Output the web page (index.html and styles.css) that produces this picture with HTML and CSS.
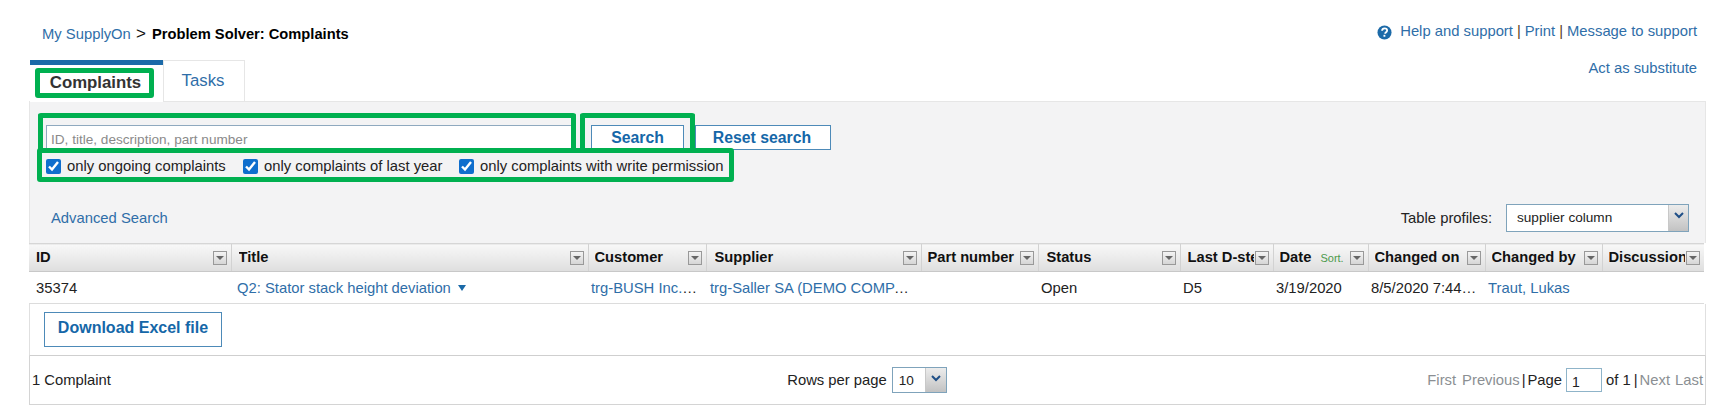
FILE: index.html
```html
<!DOCTYPE html>
<html lang="en">
<head>
<meta charset="utf-8">
<title>Problem Solver: Complaints</title>
<link rel="stylesheet" href="styles.css">
</head>
<body>
<div class="page">
  <header class="top">
    <nav class="crumbs"><a href="#">My SupplyOn</a> <span class="sep">&gt;</span> <b>Problem Solver: Complaints</b></nav>
    <div class="help">
      <svg class="help-icon" viewBox="0 0 16 16" width="15" height="15"><circle cx="8" cy="8" r="7.5" fill="#1c6aa8"/><path d="M5.4 6.2C5.5 4.6 6.6 3.7 8.1 3.7c1.6 0 2.7.9 2.7 2.2 0 1.1-.7 1.6-1.4 2.1-.5.4-.7.6-.7 1.2" fill="none" stroke="#fff" stroke-width="1.9"/><rect x="6.9" y="10.5" width="2" height="2" fill="#fff"/></svg>
      <a href="#">Help and support</a> <span class="bar">|</span> <a href="#">Print</a> <span class="bar">|</span> <a href="#">Message to support</a>
    </div>
  </header>
  <div class="tabrow">
    <div class="tab tab-active">Complaints</div>
    <a class="tab tab-plain" href="#">Tasks</a>
    <a class="substitute" href="#">Act as substitute</a>
  </div>
  <section class="panel">
    <form class="search">
      <input class="search-input" type="text" placeholder="ID, title, description, part number">
      <button class="btn btn-search" type="button">Search</button>
      <button class="btn btn-reset" type="button">Reset search</button>
    </form>
    <div class="checks">
      <label class="check check-a"><input type="checkbox" checked>only ongoing complaints</label>
      <label class="check check-b"><input type="checkbox" checked>only complaints of last year</label>
      <label class="check"><input type="checkbox" checked>only complaints with write permission</label>
    </div>
    <div class="tools">
      <a href="#">Advanced Search</a>
      <div class="profiles">
        <span>Table profiles:</span>
        <div class="select select-profile"><span class="select-value">supplier column</span><span class="select-arrow"><svg viewBox="0 0 10 7" width="10" height="7"><path d="M1 1l4 4 4-4" fill="none" stroke="#1f4f87" stroke-width="2"/></svg></span></div>
      </div>
    </div>
  </section>
  <table class="grid">
    <colgroup>
      <col class="c-id"><col class="c-title"><col class="c-customer"><col class="c-supplier"><col class="c-part"><col class="c-status"><col class="c-last"><col class="c-date"><col class="c-on"><col class="c-by"><col class="c-disc">
    </colgroup>
    <thead>
      <tr>
        <th class="first"><div class="th"><span class="th-label">ID</span><i class="filter"></i></div></th>
        <th class="th-nudge1"><div class="th"><span class="th-label">Title</span><i class="filter"></i></div></th>
        <th><div class="th"><span class="th-label">Customer</span><i class="filter"></i></div></th>
        <th class="th-nudge2"><div class="th"><span class="th-label">Supplier</span><i class="filter"></i></div></th>
        <th><div class="th"><span class="th-label">Part number</span><i class="filter"></i></div></th>
        <th class="th-nudge2"><div class="th"><span class="th-label">Status</span><i class="filter"></i></div></th>
        <th class="th-nudge1"><div class="th"><span class="th-label">Last D-step</span><i class="filter"></i></div></th>
        <th><div class="th"><span class="th-label">Date <small class="sort">Sort.</small></span><i class="filter"></i></div></th>
        <th><div class="th"><span class="th-label">Changed on</span><i class="filter"></i></div></th>
        <th><div class="th"><span class="th-label">Changed by</span><i class="filter"></i></div></th>
        <th><div class="th"><span class="th-label">Discussion</span><i class="filter"></i></div></th>
      </tr>
    </thead>
    <tbody>
      <tr>
        <td class="cell-id">35374</td>
        <td class="cell-title"><a href="#">Q2: Stator stack height deviation</a><span class="caret"></span></td>
        <td><a href="#">trg-BUSH Inc. (DEMO COMPANY)</a></td>
        <td class="cell-supplier"><a href="#">trg-Saller SA (DEMO COMPANY)</a></td>
        <td></td>
        <td>Open</td>
        <td>D5</td>
        <td>3/19/2020</td>
        <td>8/5/2020 7:44:12 AM</td>
        <td><a href="#">Traut, Lukas</a></td>
        <td></td>
      </tr>
    </tbody>
  </table>
  <div class="actions"><button class="btn btn-excel" type="button">Download Excel file</button></div>
  <footer class="pager">
    <div class="count">1 Complaint</div>
    <div class="rows">
      <span>Rows per page</span>
      <div class="select select-rows"><span class="select-value">10</span><span class="select-arrow"><svg viewBox="0 0 10 7" width="10" height="7"><path d="M1 1l4 4 4-4" fill="none" stroke="#1f4f87" stroke-width="2"/></svg></span></div>
    </div>
    <div class="pages">
      <span class="off off-first">First</span><span class="off">Previous</span><span class="div">|</span><span>Page</span><input class="page-input" type="text" value="1"><span class="of">of 1</span><span class="div">|</span><span class="off off-next">Next</span><span class="off">Last</span>
    </div>
  </footer>
  <div class="mark mark-tab"></div>
  <div class="mark mark-input"></div>
  <div class="mark mark-search"></div>
  <div class="mark mark-checks"></div>
</div>
</body>
</html>
```
FILE: styles.css
```css
* { box-sizing: border-box; }
html, body { margin: 0; background: #fff; }
body {
  font-family: "Liberation Sans", Arial, sans-serif;
  font-size: 14.8px;
  color: #222;
  overflow: hidden;
}
a { color: #2f6ea8; text-decoration: none; }
.page { position: relative; width: 1714px; height: 417px; padding-left: 29px; }
.top { display: flex; justify-content: space-between; height: 60px; padding: 23px 17px 0 13px; }
.crumbs { line-height: 18px; padding-top: 2px; }
.crumbs b { color: #000; font-size: 14.7px; margin-left: 1px; }
.sep { font-size: 17px; color: #111; margin: 0 1px; }
.help { display: flex; gap: 4px; align-items: center; height: 16px; }
.help-icon { margin-right: 4px; margin-top: 2px; }
.bar { color: #5a3a20; }
.tabrow { display: flex; height: 42px; position: relative; padding-right: 17px; }
.tab { display: block; text-align: center; font-size: 16.8px; }
.tab-active { width: 133px; margin-left: 1px; height: 42px; border-top: 5px solid #1b6aa8; background: #fff; color: #333; font-weight: bold; padding: 8px 2px 0 0; line-height: 20px; position: relative; }
.tab-plain { width: 82px; border: 1px solid #e6e6e6; border-bottom: 0; padding: 10px 2px 0 0; line-height: 20px; }
.substitute { margin-left: auto; line-height: 18px; margin-top: -1px; }
.panel {
  width: 1677px; height: 142px;
  margin-top: -1px;
  background: #f3f3f4;
  border: 1px solid #e6e6e6;
  border-bottom: 0;
  padding: 23px 0 0 16px;
}
.search { display: flex; height: 25px; }
.search-input {
  width: 530px; height: 25px; margin: 0;
  border: 1px solid #8fa9bf;
  padding: 3px 4px 0;
  font: 13.6px "Liberation Sans", Arial, sans-serif;
  background: #fff;
}
.search-input::placeholder { color: #8a8a8a; opacity: 1; }
.btn {
  display: block; margin: 0; padding: 0;
  font-family: "Liberation Sans", Arial, sans-serif;
  font-weight: bold; font-size: 15.8px; color: #1567a8;
  background: #fff; border: 1px solid #4d8ab8;
}
.btn-search { width: 93px; height: 25px; margin-left: 15px; }
.btn-reset { width: 136px; height: 25px; margin-left: 11px; padding-right: 2px; }
.checks { display: flex; height: 26px; margin-top: 3px; align-items: center; }
.check { display: flex; align-items: center; white-space: nowrap; }
.check input { width: 15px; height: 15px; margin: 0 6px 0 0; accent-color: #0f6ecd; }
.check-a { width: 197px; }
.check-b { width: 216px; }
.tools { display: flex; justify-content: space-between; align-items: center; height: 28px; margin-top: 25px; padding: 0 16px 0 5px; }
.profiles { display: flex; align-items: center; gap: 14px; }
.select { display: flex; background: #fff; border: 1px solid #7fa3bb; }
.select-value { flex: 1; font-size: 13.6px; }
.select-arrow {
  display: flex; justify-content: center;
  background: linear-gradient(#ececec, #c2c2c2);
  border-left: 1px solid #c8c8c8;
}
.select-profile { width: 183px; height: 28px; line-height: 26px; }
.select-profile .select-value { padding-left: 10px; }
.select-profile .select-arrow { width: 20px; padding-top: 7px; }
.select-rows { width: 55px; height: 26px; line-height: 25px; }
.select-rows .select-value { padding-left: 6px; }
.select-rows .select-arrow { width: 21px; padding-top: 7px; }
.grid { table-layout: fixed; width: 1675px; border-collapse: collapse; }
.c-id { width: 202px; } .c-title { width: 357px; } .c-customer { width: 118px; }
.c-supplier { width: 215px; } .c-part { width: 117px; } .c-status { width: 142px; }
.c-last { width: 93px; } .c-date { width: 95px; } .c-on { width: 117px; }
.c-by { width: 117px; } .c-disc { width: 102px; }
.grid th {
  height: 28px; padding: 0 0 2px 6px;
  background: linear-gradient(#f8f8f8, #dedede);
  border-top: 1px solid #d6d6d6;
  border-bottom: 1px solid #c8c8c8;
  border-left: 1px solid #d2d2d2;
  text-align: left; color: #111;
  font-size: 14.7px;
}
.grid th.first { border-left: 0; padding-left: 7px; }
.grid th.th-nudge1 { padding-left: 7px; }
.grid th.th-nudge2 { padding-left: 8px; }
.th { display: flex; align-items: center; justify-content: space-between; padding-right: 4px; }
.th-label { overflow: hidden; white-space: nowrap; flex: 1; min-width: 0; }
.sort { color: #4c9a4c; font-weight: normal; font-size: 11px; margin-left: 5px; }
.filter {
  flex: none; width: 14px; height: 14px; margin-left: 1px; margin-top: 2px;
  background: linear-gradient(#f4f4f4, #d6d6d6);
  border: 1px solid #999;
  position: relative;
}
.filter::after {
  content: ""; position: absolute; left: 2px; top: 4px;
  border-left: 4px solid transparent; border-right: 4px solid transparent; border-top: 4px solid #666;
}
.grid td {
  height: 32px; padding: 0 6px 0 3px;
  border-bottom: 1px solid #dcdcdc;
  white-space: nowrap; overflow: hidden; text-overflow: ellipsis;
}
.grid .cell-id { padding-left: 7px; }
.grid .cell-title { padding-left: 6px; }
.grid .cell-supplier { padding: 0 10px 0 4px; }
.caret {
  display: inline-block; margin-left: 7px; vertical-align: 2px;
  border-left: 4.5px solid transparent; border-right: 4.5px solid transparent; border-top: 6px solid #1b6aa8;
}
.actions { width: 1677px; height: 52px; padding: 8px 0 0 14px; border-left: 1px solid #e0e0e0; border-right: 1px solid #e0e0e0; border-bottom: 1px solid #cfcfcf; }
.btn-excel { width: 178px; height: 35px; font-size: 16px; padding-bottom: 3px; }
.pager {
  width: 1677px; height: 49px;
  display: grid; grid-template-columns: 1fr auto 1fr; align-items: center;
  padding: 0 2px 0 2px;
  border: 1px solid #d4d4d4; border-top: 0;
}
.rows { display: flex; align-items: center; gap: 5px; margin-left: -1px; }
.pages { display: flex; align-items: center; justify-content: flex-end; white-space: nowrap; }
.off { color: #8b8f93; }
.off-first { margin-right: 6px; }
.off-next { margin-right: 5px; }
.of { margin-right: 1px; }
.div { margin: 0 2px; }
.page-input { width: 36px; height: 24px; margin: 0 4px; padding: 3px 0 0 5px; border: 1px solid #8fb4c9; font: 14px "Liberation Sans", Arial, sans-serif; color: #222; }
.mark { position: absolute; border: 5px solid #00b050; border-radius: 3px; }
.mark-tab { left: 35px; top: 68px; width: 119px; height: 30px; }
.mark-input { left: 38px; top: 113px; width: 538px; height: 40px; border-bottom: 0; }
.mark-search { left: 580px; top: 113px; width: 115px; height: 40px; border-bottom: 0; }
.mark-checks { left: 37px; top: 148px; width: 697px; height: 34px; }
```
